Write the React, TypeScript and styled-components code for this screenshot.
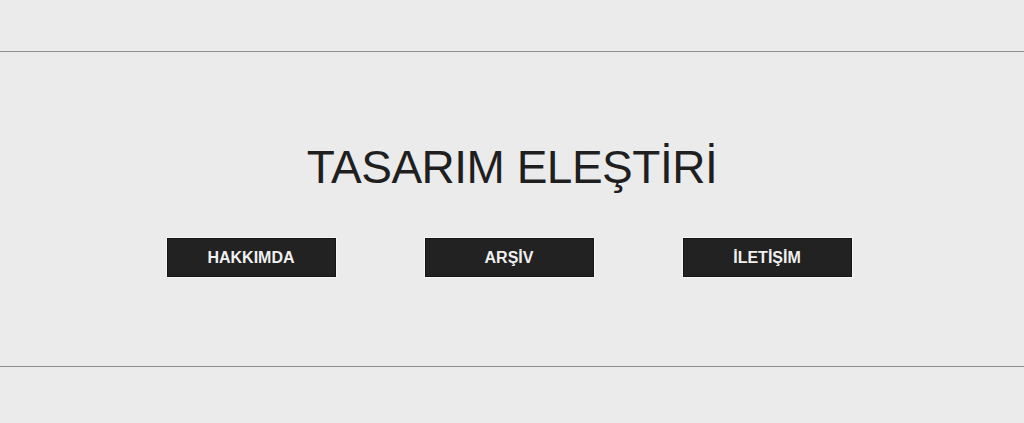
import React from "react";
import styled, { createGlobalStyle } from "styled-components";

const GlobalStyle = createGlobalStyle`
  html, body {
    margin: 0;
    padding: 0;
    background: #ebebeb;
  }
  body {
    font-family: "Liberation Sans", Arial, sans-serif;
    color: #222;
  }
`;

const Page = styled.div`
  display: flex;
  flex-direction: column;
  height: 423px;
`;

const TopBar = styled.header`
  height: 51px;
  border-bottom: 1px solid #8f8f8f;
`;

const Hero = styled.main`
  height: 315px;
  box-sizing: border-box;
  padding-top: 92px;
  display: flex;
  flex-direction: column;
  align-items: center;
  gap: 47px;
  border-bottom: 1px solid #8f8f8f;
`;

const Title = styled.h1`
  margin: 0;
  font-size: 46px;
  font-weight: 400;
  line-height: 1;
  color: #1f1f1f;
  letter-spacing: -0.5px;
`;

const Nav = styled.nav`
  display: flex;
  gap: 87px;
  margin-right: 6px;
`;

const NavButton = styled.a`
  display: flex;
  align-items: center;
  justify-content: center;
  width: 171px;
  height: 41px;
  box-sizing: border-box;
  background: #222;
  border: 1px solid #f6f6f6;
  box-shadow: inset 0 0 0 1px #151515;
  color: #f0f0f0;
  font-size: 16px;
  font-weight: 700;
  text-decoration: none;
`;

const items = ["HAKKIMDA", "ARŞİV", "İLETİŞİM"];

export default function App() {
  return (
    <Page>
      <GlobalStyle />
      <TopBar />
      <Hero>
        <Title>TASARIM ELEŞTİRİ</Title>
        <Nav>
          {items.map((label) => (
            <NavButton key={label} href="#">
              {label}
            </NavButton>
          ))}
        </Nav>
      </Hero>
    </Page>
  );
}
